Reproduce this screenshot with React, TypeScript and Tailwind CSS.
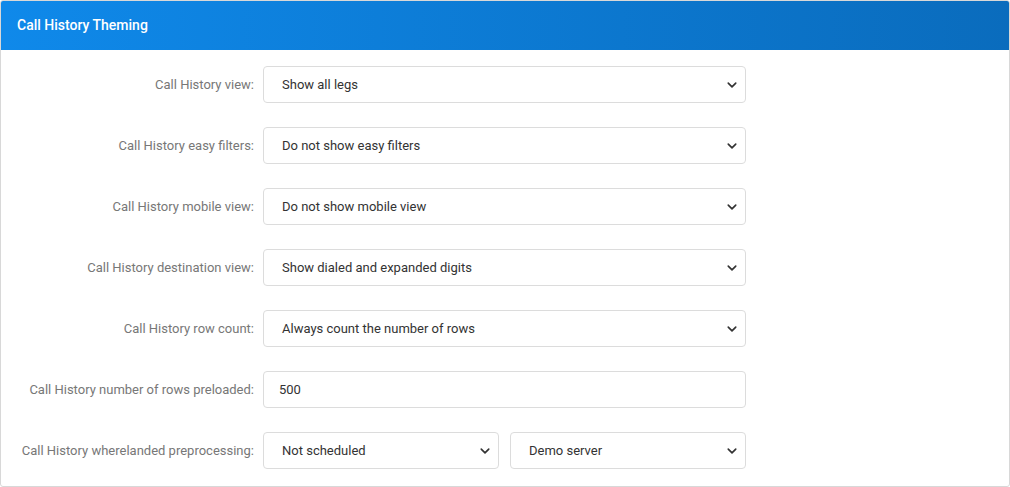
import React from "react";

const Chev = () => (
  <svg width="10" height="10" viewBox="0 0 16 16" className="absolute right-[8px] top-1/2 -translate-y-1/2 text-[#333]">
    <path d="M2 5l6 6 6-6" fill="none" stroke="currentColor" strokeWidth="2.6" strokeLinecap="round" strokeLinejoin="round" />
  </svg>
);

const Sel = ({ text, w }: { text: string; w: string }) => (
  <div className={`relative ${w} h-[37px] border border-[#dcdcdc] rounded-[4px] bg-white flex items-center pl-[18px] text-[13px] text-[#333]`}>
    {text}
    <Chev />
  </div>
);

const rows: [string, string][] = [
  ["Call History view:", "Show all legs"],
  ["Call History easy filters:", "Do not show easy filters"],
  ["Call History mobile view:", "Do not show mobile view"],
  ["Call History destination view:", "Show dialed and expanded digits"],
  ["Call History row count:", "Always count the number of rows"],
];

export default function App() {
  return (
    <div className="w-[1010px] h-[487px] bg-white" style={{ fontFamily: "Roboto, sans-serif" }}>
      <div className="h-[487px] border border-[#d8d8d8] rounded-[3px] overflow-hidden">
        <div className="h-[49px] bg-gradient-to-r from-[#0f89ea] to-[#0a6cbd] flex items-center pl-[16px] text-white text-[14px] font-medium">
          Call History Theming
        </div>
        <div className="pt-[16px] flex flex-col gap-[24px]">
          {rows.map(([l, v]) => (
            <div key={l} className="flex items-center">
              <div className="w-[253px] text-right text-[13px] text-[#777] pr-[0px]">{l}</div>
              <div className="ml-[9px]"><Sel text={v} w="w-[483px]" /></div>
            </div>
          ))}
          <div className="flex items-center">
            <div className="w-[253px] text-right text-[13px] text-[#777]">Call History number of rows preloaded:</div>
            <div className="ml-[9px] w-[483px] h-[37px] border border-[#dcdcdc] rounded-[4px] flex items-center pl-[15px] text-[13px] text-[#333]">500</div>
          </div>
          <div className="flex items-center">
            <div className="w-[253px] text-right text-[13px] text-[#777]">Call History wherelanded preprocessing:</div>
            <div className="ml-[9px] flex gap-[11px]">
              <Sel text="Not scheduled" w="w-[236px]" />
              <Sel text="Demo server" w="w-[236px]" />
            </div>
          </div>
        </div>
      </div>
    </div>
  );
}
